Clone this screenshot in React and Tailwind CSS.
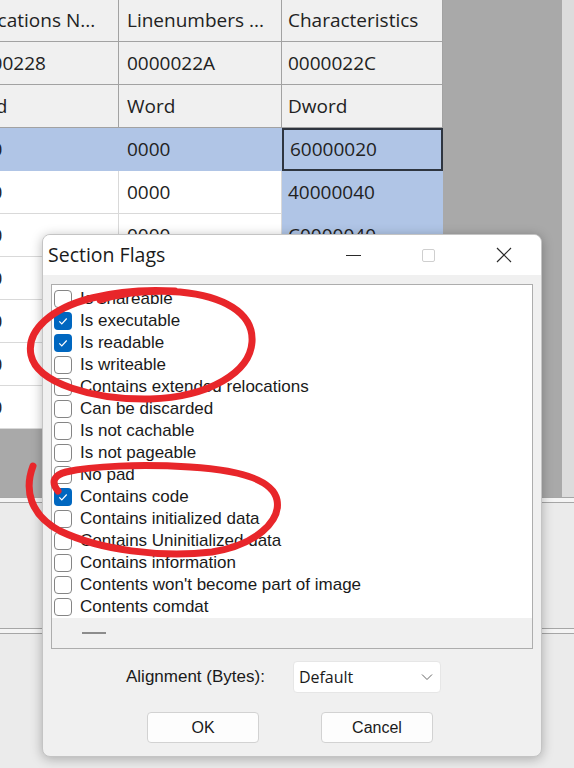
import React from "react";

const rows = [
  { cells: ["Relocations N...", "Linenumbers ...", "Characteristics"], fixed: true, h: "h-[42px]" },
  { cells: ["00000228", "0000022A", "0000022C"], fixed: true },
  { cells: ["Word", "Word", "Dword"], fixed: true },
  { cells: ["0000", "0000", "60000020"], sel: "row" },
  { cells: ["0000", "0000", "40000040"], sel: "col" },
  { cells: ["0000", "0000", "C0000040"], sel: "col" },
  { cells: ["0000", "0000", "C0000040"] },
  { cells: ["0000", "0000", "C0000040"] },
  { cells: ["0000", "0000", "42000040"] },
  { cells: ["0000", "0000", "C2000040"] },
];

const widths = ["w-[119px]", "w-[163px]", "w-[161px]"];

const flags = [
  ["Is shareable", false],
  ["Is executable", true],
  ["Is readable", true],
  ["Is writeable", false],
  ["Contains extended relocations", false],
  ["Can be discarded", false],
  ["Is not cachable", false],
  ["Is not pageable", false],
  ["No pad", false],
  ["Contains code", true],
  ["Contains initialized data", false],
  ["Contains Uninitialized data", false],
  ["Contains information", false],
  ["Contents won't become part of image", false],
  ["Contents comdat", false],
];

const Cell = ({ text, col, row }) => {
  let cls = "bg-white border-r border-b border-[#d9d9d9]";
  if (row.fixed) cls = "bg-[#f0f0f0] border-r border-b border-[#a2a2a2]";
  else if (row.sel === "row" && col < 2) cls = "bg-[#b0c5e6] border-r border-b border-[#b0c5e6]";
  else if (row.sel === "row" && col === 2) cls = "bg-[#b0c5e6] border-2 border-[#2e3540]";
  else if (row.sel === "col" && col === 2) cls = "bg-[#b0c5e6] border-r border-[#b0c5e6]";

  return (
    <div className={`${widths[col]} h-full flex items-center overflow-hidden ${cls}`}>
      <span
        className={`whitespace-nowrap text-[19px] leading-none text-[#222] ${
          col === 0 ? "ml-[-41px]" : col === 1 ? "ml-[8px]" : "ml-[6px]"
        }`}
      >
        {text}
      </span>
    </div>
  );
};

const Checkbox = ({ on }) =>
  on ? (
    <span className="w-[18px] h-[18px] rounded-[4px] bg-[#0067c0] flex items-center justify-center shrink-0">
      <svg width="12" height="12" viewBox="0 0 12 12">
        <path d="M2.3 6.3l2.5 2.5 4.9-5.3" stroke="#fff" strokeWidth="1.2" fill="none" />
      </svg>
    </span>
  ) : (
    <span className="w-[18px] h-[18px] rounded-[4px] border border-[#858585] bg-white shrink-0" />
  );

export default function App() {
  return (
    <div className="relative w-[574px] h-[768px] overflow-hidden bg-[#ebebeb] font-['Open_Sans',sans-serif]">
      {/* background window */}
      <div className="flex flex-col h-full">
        <div className="flex h-[497px]">
          <div className="flex-1 bg-[#a9a9a9]">
            {rows.map((row, i) => (
              <div key={i} className={`flex ${row.h || "h-[43px]"}`}>
                {row.cells.map((c, j) => (
                  <Cell key={j} text={c} col={j} row={row} />
                ))}
              </div>
            ))}
          </div>
          <div className="w-[12px] bg-[#dcdcdc]" />
        </div>
        <div className="h-[6px] border-y border-[#a6a6a6] bg-[#f4f4f4]" />
        <div className="h-[125px]" />
        <div className="h-[6px] border-y border-[#a6a6a6] bg-[#f4f4f4]" />
        <div className="flex-1" />
      </div>

      {/* Section Flags dialog */}
      <div className="absolute left-[42px] top-[234px] w-[500px] h-[523px] rounded-[8px] overflow-hidden bg-[#f0f0f0] border border-[#c4c4c4] shadow-[0_2px_12px_rgba(0,0,0,0.28)] flex flex-col">
        <div className="h-[40px] bg-white flex items-center shrink-0">
          <span className="pl-[5px] text-[19.5px] text-[#1b1b1b]">Section Flags</span>
          <div className="ml-auto flex h-full">
            <div className="w-[75px] flex items-center justify-center">
              <span className="w-[15px] h-[1px] bg-[#2a2a2a]" />
            </div>
            <div className="w-[75px] flex items-center justify-center">
              <span className="w-[13px] h-[13px] border border-[#cfcfcf] rounded-[2px]" />
            </div>
            <div className="w-[75px] flex items-center justify-center">
              <svg width="16" height="16" viewBox="0 0 16 16">
                <path d="M1 1L15 15M15 1L1 15" stroke="#2a2a2a" strokeWidth="1.2" />
              </svg>
            </div>
          </div>
        </div>

        <div className="px-[8px] pt-[9px] flex flex-col">
          <div className="h-[365px] border border-[#adadad] bg-white flex flex-col overflow-hidden font-['Liberation_Sans',Arial,sans-serif]">
            <div className="pt-[3px]">
              {flags.map(([label, on]) => (
                <div key={label} className="h-[22px] flex items-center pl-[2px]">
                  <Checkbox on={on} />
                  <span className="ml-[8px] text-[17px] text-[#1a1a1a] whitespace-nowrap">{label}</span>
                </div>
              ))}
            </div>
            <div className="flex-1 bg-[#f0f0f0] flex items-center">
              <span className="ml-[30px] w-[24px] h-[2px] bg-[#8c8c8c]" />
            </div>
          </div>

          <div className="mt-[12px] h-[32px] flex items-center pl-[75px]">
            <span className="text-[17px] text-[#1a1a1a] font-['Liberation_Sans',Arial,sans-serif]">
              Alignment (Bytes):
            </span>
            <div className="ml-[28px] w-[148px] h-[32px] bg-white rounded-[4px] border border-[#e6e6e6] flex items-center pl-[5px] pr-[7px]">
              <span className="text-[16px] text-[#1a1a1a]">Default</span>
              <svg className="ml-auto" width="12" height="8" viewBox="0 0 12 8">
                <path d="M1 1.5L6 6.5L11 1.5" stroke="#666" strokeWidth="1" fill="none" />
              </svg>
            </div>
          </div>

          <div className="mt-[19px] flex pl-[96px] gap-[62px] font-['Liberation_Sans',Arial,sans-serif]">
            <button className="w-[112px] h-[31px] rounded-[4px] border border-[#d2d2d2] bg-[#fdfdfd] text-[16px] text-[#1a1a1a]">
              OK
            </button>
            <button className="w-[112px] h-[31px] rounded-[4px] border border-[#d2d2d2] bg-[#fdfdfd] text-[16px] text-[#1a1a1a]">
              Cancel
            </button>
          </div>
        </div>
      </div>

      {/* red hand-drawn annotations */}
      <svg className="absolute inset-0 pointer-events-none" width="574" height="768" viewBox="0 0 574 768">
        <path
          d="M175 291 C140 289 115 292 92 298 C52 308 26 330 31 355 C37 384 95 400 150 399 C210 397 250 372 252 342 C254 312 222 296 180 292 C150 290 122 293 100 300"
          stroke="#e8262a"
          strokeWidth="7"
          fill="none"
          strokeLinecap="round"
        />
        <path
          d="M33 466 C24 490 30 515 60 531 C100 550 160 558 212 552 C256 545 281 521 277 500 C273 480 240 470 190 467 C140 464 92 466 66 472 C55 475 50 481 58 491"
          stroke="#e8262a"
          strokeWidth="7"
          fill="none"
          strokeLinecap="round"
        />
      </svg>
    </div>
  );
}
